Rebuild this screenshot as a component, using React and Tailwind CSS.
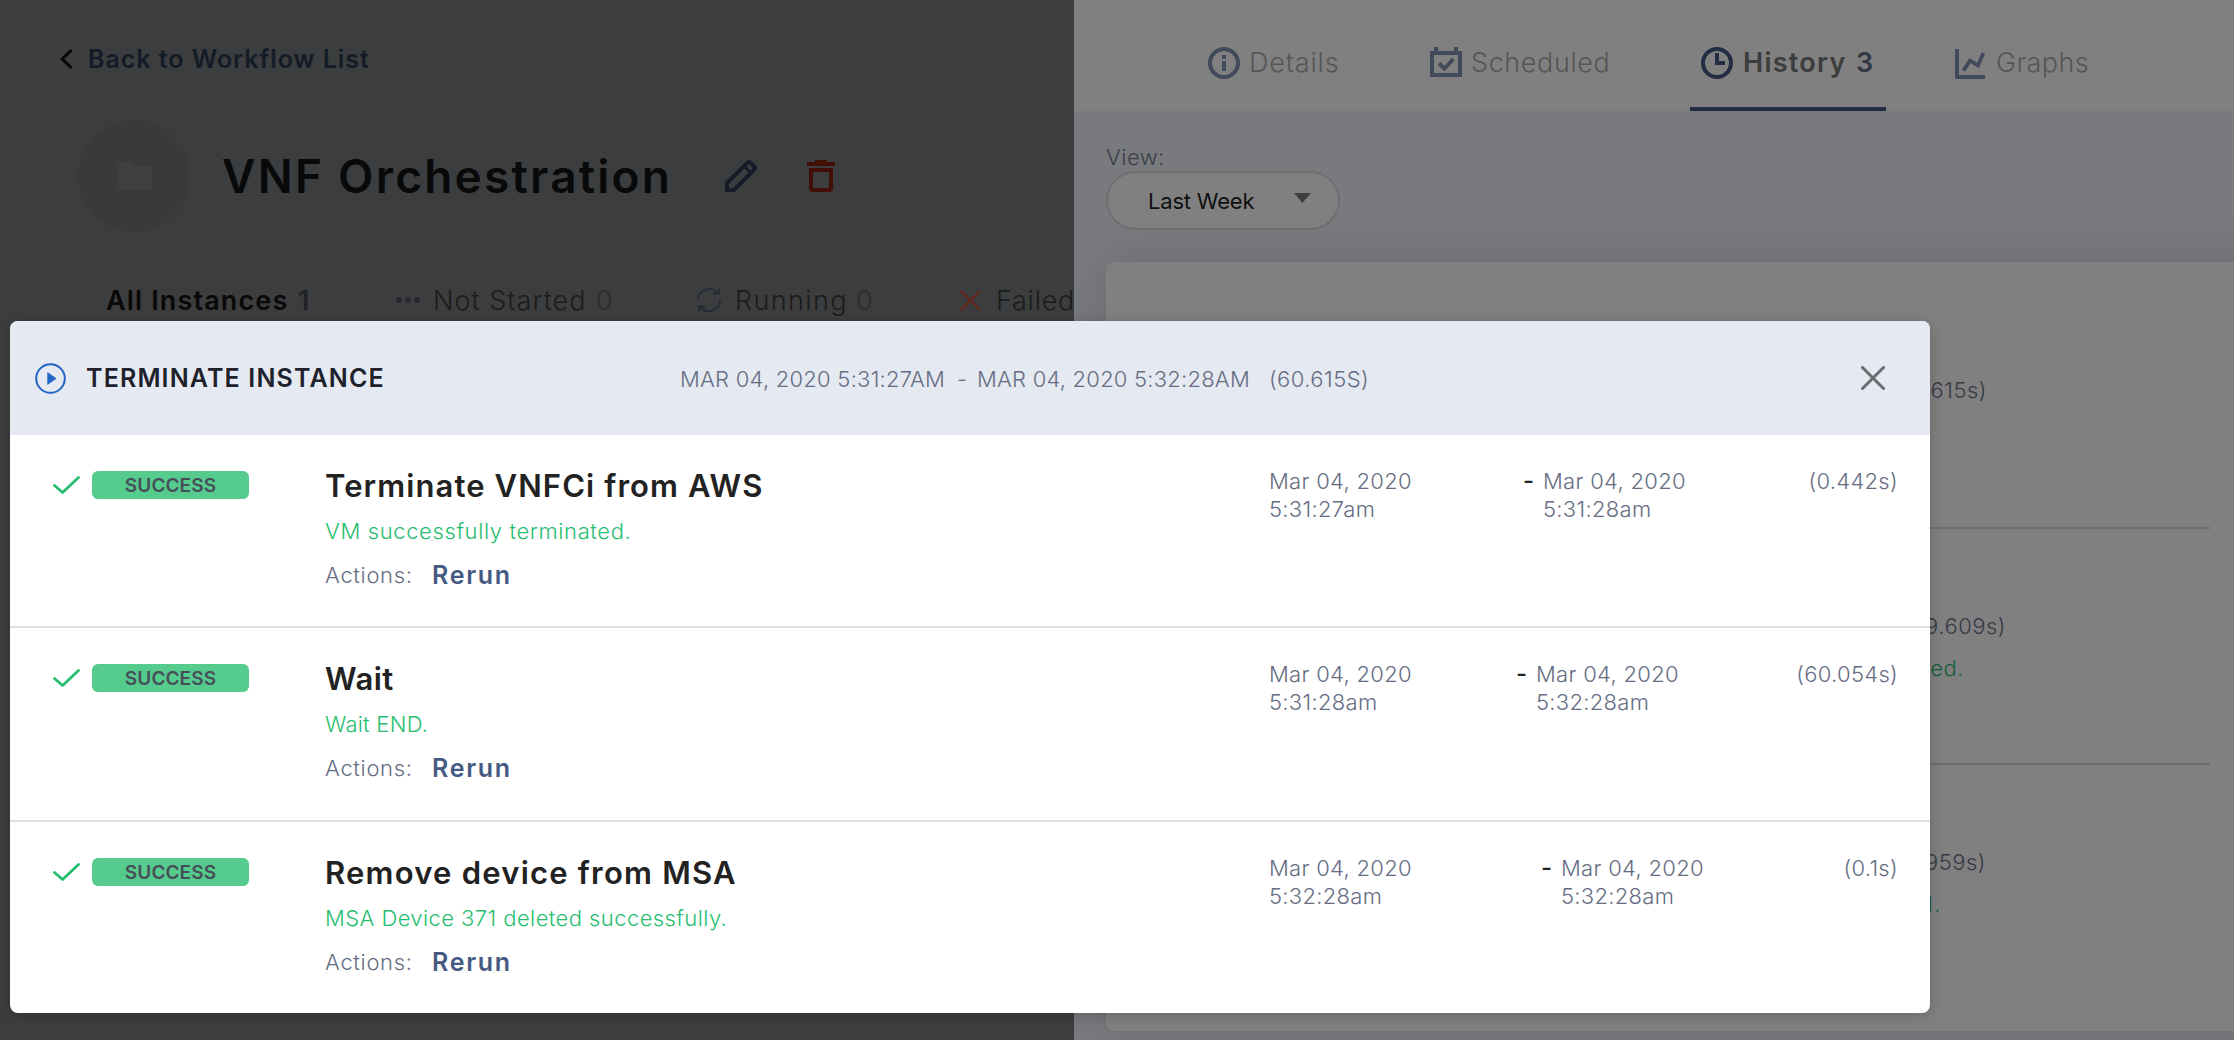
import React from "react";

const InfoIcon = () => (
  <svg className="h-8 w-8 shrink-0 text-[#414a5b]" viewBox="0 0 32 32" fill="none" stroke="currentColor" strokeWidth="4">
    <circle cx="16" cy="16" r="14" />
    <path d="M16 8v4M16 14v10" />
  </svg>
);

const CalendarIcon = () => (
  <svg className="h-8 w-8 shrink-0 text-[#414a5b]" viewBox="0 0 32 32" fill="none" stroke="currentColor" strokeWidth="4">
    <path d="M2 6h28v22H2zM6 0v5M26 0v5" />
    <path d="M9 16.5l5.6 5L23.4 12" />
  </svg>
);

const ClockIcon = () => (
  <svg className="h-8 w-8 shrink-0 text-[#222c42]" viewBox="0 0 32 32" fill="none" stroke="currentColor" strokeWidth="4">
    <circle cx="16" cy="16" r="14" />
    <path d="M16 6v10h8" />
  </svg>
);

const GraphIcon = () => (
  <svg className="h-8 w-8 shrink-0 text-[#414a5b]" viewBox="0 0 32 32" fill="none" stroke="currentColor" strokeWidth="4">
    <path d="M2 2v28h28" />
    <path d="M8.500 23.500l6.500-10 8 5L28.500 6" strokeWidth="3.8" />
  </svg>
);

const PencilIcon = () => (
  <svg className="h-8 w-8 shrink-0 text-[#151b28]" viewBox="0 0 32 32" fill="none" stroke="currentColor" strokeWidth="4">
    <path d="M2 30v-7.200L22.600 2.600q1.400-1.200 2.800 0l4 4q1.200 1.400 0 2.800L9 30z" />
    <path d="M19.500 6.500l6 6" strokeWidth="3" />
  </svg>
);

const TrashIcon = () => (
  <svg className="h-8 w-7 shrink-0" viewBox="0 0 28 32" fill="none" stroke="#420f07" strokeWidth="4">
    <path d="M0 4h28" />
    <path d="M8 1h12" strokeWidth="2" />
    <path d="M4 10h20v18q0 2-2 2H6q-2 0-2-2z" />
  </svg>
);

const SyncIcon = () => (
  <svg className="h-6 w-6 shrink-0 text-[#272b35]" viewBox="0 0 24 24" fill="none" stroke="currentColor" strokeWidth="2">
    <path d="M1 12A11 11 0 0 1 20.500 5" />
    <path d="M22 .5v5h-6" />
    <path d="M23 12A11 11 0 0 1 3.500 19" />
    <path d="M2 23.500v-5h6" />
  </svg>
);

const CrossIcon = ({ className }) => (
  <svg className={className} viewBox="0 0 24 24" fill="none" stroke="currentColor" strokeLinecap="round">
    <path d="M1.500 1.500l21 21M22.500 1.500l-21 21" />
  </svg>
);

const CheckIcon = () => (
  <svg className="h-[18px] w-[27px] shrink-0" viewBox="0 0 27 18" fill="none" stroke="#27bd70" strokeWidth="2.800" strokeLinecap="round" strokeLinejoin="round">
    <path d="M1.500 9.500L9.600 16.500L25.500 1.500" />
  </svg>
);

const PlayIcon = () => (
  <svg className="h-[31px] w-[31px] shrink-0" viewBox="0 0 31 31">
    <circle cx="15.500" cy="15.500" r="14.300" fill="none" stroke="#2264c4" strokeWidth="2" />
    <path d="M12.300 9.800v11.400q0 .8.700.3l7.900-5.400q.6-.6 0-1.200l-7.900-5.400q-.7-.4-.7.300z" fill="#2264c4" />
  </svg>
);

const steps = [
  {
    height: "h-[193px] border-b-2",
    title: "Terminate VNFCi from AWS",
    titleTracking: "tracking-[1.1px]",
    message: "VM successfully terminated.",
    messageTracking: "tracking-[0.62px]",
    start: "5:31:27am",
    end: "5:31:28am",
    duration: "(0.442s)",
    endWidth: "w-[375px]",
  },
  {
    height: "h-[194px] border-b-2",
    title: "Wait",
    titleTracking: "tracking-[0.5px]",
    message: "Wait END.",
    messageTracking: "tracking-[0.25px]",
    start: "5:31:28am",
    end: "5:32:28am",
    duration: "(60.054s)",
    endWidth: "w-[382px]",
  },
  {
    height: "h-[191px]",
    title: "Remove device from MSA",
    titleTracking: "tracking-[1.22px]",
    message: "MSA Device 371 deleted successfully.",
    messageTracking: "tracking-[0.42px]",
    start: "5:32:28am",
    end: "5:32:28am",
    duration: "(0.1s)",
    endWidth: "w-[357px]",
  },
];

const Step = ({ step }) => (
  <div className={`flex border-[#dfdfdf] pr-8 ${step.height}`}>
    <div className="flex w-[315px] shrink-0 items-start pt-[36px] pl-[43px]">
      <div className="mt-[5px] flex">
        <CheckIcon />
      </div>
      <div className="ml-3 flex h-7 w-[157px] items-center justify-center rounded-md bg-[#55cb8e] pt-[2px] text-[19px] font-semibold tracking-[0.1px] text-[#474f59]">
        SUCCESS
      </div>
    </div>
    <div className="flex flex-1 flex-col">
      <h3 className={`mt-[31px] text-[31px] leading-10 font-semibold text-[#222222] ${step.titleTracking}`}>{step.title}</h3>
      <p className={`mt-[11px] text-[22px] leading-7 text-[#27bd70] ${step.messageTracking}`}>{step.message}</p>
      <div className="mt-4 flex leading-7">
        <span className="w-[107px] tracking-[0.67px]">Actions:</span>
        <span className="text-[25px] font-semibold tracking-[1.7px] text-[#455a83]">Rerun</span>
      </div>
    </div>
    <div className="flex w-[629px] shrink-0 justify-between pt-8 leading-7 whitespace-nowrap">
      <div className="tracking-[0.3px]">
        <div>Mar 04, 2020</div>
        <div>{step.start}</div>
      </div>
      <div className={`flex justify-between ${step.endWidth}`}>
        <div className="flex">
          <span className="w-[20px] text-[24px] font-medium text-[#222222]">-</span>
          <div className="tracking-[0.3px]">
            <div>Mar 04, 2020</div>
            <div>{step.end}</div>
          </div>
        </div>
        <div className="tracking-[0.3px]">{step.duration}</div>
      </div>
    </div>
  </div>
);

const Modal = () => (
  <div className="absolute top-[321px] left-[10px] h-[692px] w-[1920px] overflow-hidden rounded-lg bg-white text-[22px] font-light text-[#666d83] shadow-[0_2px_14px_rgba(0,0,0,0.2)]">
    <div className="flex h-[114px] items-center bg-[#e5e9f1] pl-[25px]">
      <PlayIcon />
      <h2 className="ml-5 w-[594px] pt-[2px] text-[25px] font-semibold tracking-[1.15px] text-[#1d212b]">TERMINATE INSTANCE</h2>
      <div className="flex pt-[2px] leading-7 whitespace-nowrap">
        <span className="w-[277px] tracking-[0.24px]">MAR 04, 2020 5:31:27AM</span>
        <span className="w-[20px]">-</span>
        <span className="w-[292px] tracking-[0.22px]">MAR 04, 2020 5:32:28AM</span>
        <span className="w-[592px] tracking-[0.45px]">(60.615S)</span>
      </div>
      <CrossIcon className="h-6 w-6 shrink-0 stroke-[3] text-[#6b6c6f]" />
    </div>
    {steps.map((step) => (
      <Step key={step.title} step={step} />
    ))}
  </div>
);

const LeftPanel = () => (
  <div className="h-full w-[1074px] shrink-0 overflow-hidden bg-[#3c3d3e]">
    <div className="mt-[39px] flex h-10 items-center pl-[60px]">
      <svg className="h-5 w-[13px] shrink-0" viewBox="0 0 13 20" fill="none" stroke="#080808" strokeWidth="3">
        <path d="M11.600 1L2.200 10l9.400 9" />
      </svg>
      <span className="ml-[15px] pt-[2px] text-[25px] font-semibold tracking-[0.96px] text-[#141b28]">Back to Workflow List</span>
    </div>
    <div className="mt-[41px] flex h-28 items-center pl-[78px]">
      <div className="flex h-28 w-28 items-center justify-center rounded-full bg-[#393a3b]">
        <svg className="h-7 w-[35px]" viewBox="0 0 35 28" fill="#3f3f3e">
          <path d="M2 0h12l4 4h15q2 0 2 2v20q0 2-2 2H2q-2 0-2-2V2q0-2 2-2z" />
        </svg>
      </div>
      <h1 className="ml-8 w-[503px] text-[46px] font-semibold tracking-[2.25px] whitespace-nowrap text-[#090909]">VNF Orchestration</h1>
      <PencilIcon />
      <div className="ml-[50px]">
        <TrashIcon />
      </div>
    </div>
    <div className="mt-12 flex h-10 items-center pl-[106px] text-[27px] font-light whitespace-nowrap text-[#1b1c1c]">
      <div className="flex w-[290px] shrink-0 pt-[2px] font-semibold">
        <span className="w-[192px] tracking-[1.14px] text-[#090909]">All Instances</span>
        <span className="text-[#1f2126]">1</span>
      </div>
      <div className="flex w-[301px] shrink-0 items-center">
        <svg className="h-2 w-6" viewBox="0 0 24 8" fill="#28292d">
          <circle cx="3" cy="4" r="3" />
          <circle cx="12" cy="4" r="3" />
          <circle cx="21" cy="4" r="3" />
        </svg>
        <span className="ml-[13px] w-[163px] pt-[2px] tracking-[1.03px]">Not Started</span>
        <span className="pt-[2px] text-[#2b2c2f]">0</span>
      </div>
      <div className="flex w-[263px] shrink-0 items-center">
        <SyncIcon />
        <span className="ml-[14px] w-[121px] pt-[2px] tracking-[1.36px]">Running</span>
        <span className="pt-[2px] text-[#2b2c2f]">0</span>
      </div>
      <div className="flex shrink-0 items-center">
        <CrossIcon className="h-[21px] w-[21px] stroke-[2.8] text-[#61281e]" />
        <span className="ml-[15px] pt-[2px] tracking-[0.75px]">Failed</span>
      </div>
    </div>
  </div>
);

const TabBar = () => (
  <div className="flex h-[111px] shrink-0 bg-[#808080] pl-[122px] text-[27px] font-light whitespace-nowrap text-[#565656]">
    <div className="flex w-[223px] shrink-0 items-center pt-[15px] pl-3">
      <InfoIcon />
      <span className="ml-[9px] pt-px tracking-[0.82px]">Details</span>
    </div>
    <div className="flex w-[271px] shrink-0 items-center pt-[15px] pl-[11px]">
      <CalendarIcon />
      <span className="ml-[9px] pt-px tracking-[0.6px]">Scheduled</span>
    </div>
    <div className="flex w-[196px] shrink-0 items-center border-b-4 border-[#222c42] pt-[19px] pl-[11px] font-semibold text-[#3c3c3c]">
      <ClockIcon />
      <span className="ml-[10px] w-[113px] pt-px tracking-[1.25px]">History</span>
      <span className="pt-px text-[#313743]">3</span>
    </div>
    <div className="ml-[69px] flex shrink-0 items-center pt-[15px]">
      <GraphIcon />
      <span className="ml-[9px] pt-px tracking-[0.4px]">Graphs</span>
    </div>
  </div>
);

const history = [
  { height: "h-[267px] border-b-2 pt-[114px]", pad: "pr-[223px]", duration: "(60.615s)" },
  { height: "h-[236px] border-b-2 pt-[83px]", pad: "pr-[204px]", duration: "(9.609s)", message: "ed.", messagePad: "pr-[246px]" },
  { height: "h-[200px] pt-[83px]", pad: "pr-[224px]", duration: "(0.959s)", message: "d.", messagePad: "pr-[268px] tracking-[1.5px]" },
];

const RightPanel = () => (
  <div className="flex h-full flex-1 flex-col overflow-hidden bg-[#797a7d]">
    <TabBar />
    <div className="flex flex-col pt-8 pl-8 text-[22px] leading-7 font-light">
      <span className="tracking-[0.47px] text-[#3a3e4a]">View:</span>
      <div className="flex h-[59px] w-[234px] items-center justify-between rounded-full border-2 border-[#6d6e70] bg-[#808080] pr-[27px] pl-10 font-normal text-[#101010]">
        <span className="tracking-[-0.2px]">Last Week</span>
        <svg className="mb-[5px] h-[10px] w-[17px]" viewBox="0 0 17 10" fill="#3f3f3f">
          <path d="M0 0h17L8.500 10z" />
        </svg>
      </div>
      <div className="mt-8 h-[769px] w-[1160px] rounded-lg bg-[#808080] pl-8 tracking-[0.5px] text-[#363a45] shadow-[0_0_50px_rgba(0,0,0,0.13)]">
        {history.map((entry) => (
          <div key={entry.duration} className={`w-[1072px] border-[#6f6f6f] text-right ${entry.height}`}>
            <div className={entry.pad}>{entry.duration}</div>
            {entry.message && <div className={`mt-[14px] text-[#145f38] ${entry.messagePad}`}>{entry.message}</div>}
          </div>
        ))}
      </div>
    </div>
  </div>
);

export default function App() {
  return (
    <div className="relative flex h-[1040px] w-[2234px] overflow-hidden font-['Inter',sans-serif]">
      <LeftPanel />
      <RightPanel />
      <Modal />
    </div>
  );
}
